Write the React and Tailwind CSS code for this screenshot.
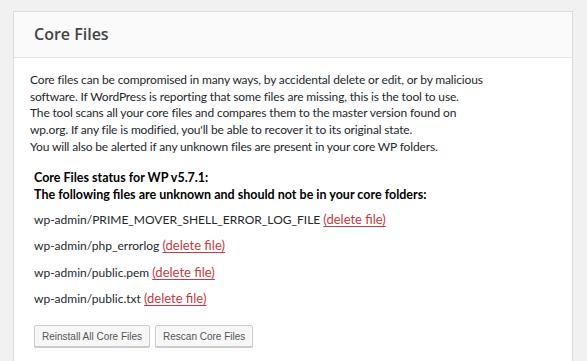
import React from "react";

const files = [
  "wp-admin/PRIME_MOVER_SHELL_ERROR_LOG_FILE",
  "wp-admin/php_errorlog",
  "wp-admin/public.pem",
  "wp-admin/public.txt",
];

const body = { fontFamily: 'Lato, "Open Sans", sans-serif' };
const btn = { fontFamily: '"Liberation Sans", Arial, sans-serif' };

export default function App() {
  return (
    <div className="min-h-[361px] bg-[#f1f1f1] pl-[13px] pr-[14px] pt-[11px] pb-4" style={body}>
      <div className="border border-[#dcdcdc] bg-white">
        <div className="h-[46px] border-b border-[#e5e5e5] bg-[#fafafa] pl-[20px] pt-[14px]">
          <h2
            className="text-[16px] font-semibold text-[#444] leading-[16px]"
            style={{ fontFamily: '"Open Sans", sans-serif' }}
          >
            Core Files
          </h2>
        </div>
        <div className="pl-[16px] pr-4 pt-[14px] pb-6 text-[12px] text-[#23282d]">
          <p className="leading-[16.67px] tracking-[-0.15px]">
            Core files can be compromised in many ways, by accidental delete or edit, or by malicious
            <br />
            software. If WordPress is reporting that some files are missing, this is the tool to use.
            <br />
            The tool scans all your core files and compares them to the master version found on
            <br />
            wp.org. If any file is modified, you'll be able to recover it to its original state.
            <br />
            You will also be alerted if any unknown files are present in your core WP folders.
          </p>
          <div className="pl-[4px] mt-[15px]">
            <div className="font-bold text-[12.5px] text-black leading-[16.67px]">
              Core Files status for WP v5.7.1:
              <br />
              The following files are unknown and should not be in your core folders:
            </div>
            <div className="mt-[7px] flex flex-col gap-[9.6px]">
              {files.map((f) => (
                <div key={f} className="leading-[16px]">
                  {f}{" "}
                  <a href="#" className="text-[13px] text-[#c33b43] underline underline-offset-2">
                    (delete file)
                  </a>
                </div>
              ))}
            </div>
            <div className="mt-[18px] flex gap-[5px]">
              <button
                style={btn}
                className="h-[22px] px-[7px] text-[10px] text-[#555] bg-[#f7f7f7] border border-[#ccc] rounded-[2px] shadow-[0_1px_0_#ccc]"
              >
                Reinstall All Core Files
              </button>
              <button
                style={btn}
                className="h-[22px] px-[7px] text-[10px] text-[#555] bg-[#f7f7f7] border border-[#ccc] rounded-[2px] shadow-[0_1px_0_#ccc]"
              >
                Rescan Core Files
              </button>
            </div>
          </div>
        </div>
      </div>
    </div>
  );
}
